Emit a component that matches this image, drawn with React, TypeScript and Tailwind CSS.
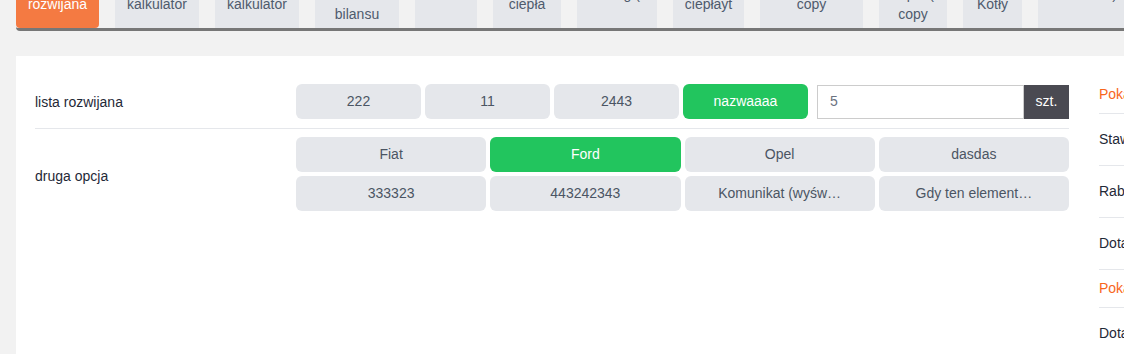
import React from "react";

type Tab = { w: string; lines: string[]; active?: boolean };

const tabs: Tab[] = [
    { w: "w-[83px]", lines: ["rozwijana"], active: true },
    { w: "w-[84px]", lines: ["kalkulator"] },
    { w: "w-[84px]", lines: ["kalkulator"] },
    { w: "w-[84px]", lines: ["kalkulator", "bilansu"] },
    { w: "w-[62px]", lines: [] },
    { w: "w-[68px]", lines: ["ciepła"] },
    { w: "w-[80px]", lines: ["Obieg (", ""] },
    { w: "w-[71px]", lines: ["ciepłayt"] },
    { w: "w-[103px]", lines: ["copy"] },
    { w: "w-[68px]", lines: ["kopia (", "copy"] },
    { w: "w-[59px]", lines: ["Kotły"] },
    { w: "w-[95px]", lines: ["kotłownia)", ""] },
];

const firstRow = ["222", "11", "2443", "nazwaaaa"];
const secondRow = ["Fiat", "Ford", "Opel", "dasdas", "333323", "443242343", "Komunikat (wyśw…", "Gdy ten element…"];

const sidebar = [
    { label: "Pokaż szczegóły", accent: true },
    { label: "Stawka VAT", accent: false },
    { label: "Rabat", accent: false },
    { label: "Dotacja", accent: false },
    { label: "Pokaż więcej", accent: true },
    { label: "Dotacja 2", accent: false },
];

const OptionButton = ({ label, selected, className }: { label: string; selected?: boolean; className: string }) => (
    <button
        className={`h-[35px] rounded-md text-[14px] whitespace-nowrap overflow-hidden ${className} ${selected ? "bg-[#22c55e] text-white" : "bg-[#e5e7eb] text-[#4b5563]"}`}
    >
        {label}
    </button>
);

const App = () => {
    return (
        <div className="h-[354px] w-full overflow-hidden bg-[#f2f2f2] font-['Liberation_Sans',Arial,sans-serif]">
            {/* Tabs */}
            <div className="-mt-[20px] ml-4 flex gap-4 border-b-[3px] border-[#777777] rounded-bl-[4px]">
                {tabs.map((tab, i) => (
                    <div
                        key={i}
                        className={`${tab.w} h-[48px] shrink-0 flex flex-col items-center justify-center text-center text-[14px] leading-5 whitespace-nowrap ${tab.active ? "bg-[#f47a42] text-white rounded-b-[4px]" : "bg-[#e5e7eb] text-[#4f5b6d]"}`}
                    >
                        {tab.lines.map((line, j) => (
                            <div key={j} className="h-5">{line}</div>
                        ))}
                    </div>
                ))}
            </div>

            {/* Panel */}
            <div className="mt-[25px] ml-4 flex bg-white pl-[19px] pt-5 h-[400px]">
                <div className="w-[1034px] shrink-0">
                    <div className="flex items-center pt-2 pb-[9px] border-b border-[#e5e7eb]">
                        <div className="w-[261px] shrink-0 pt-0.5 text-[14px] text-[#1f2937]">lista rozwijana</div>
                        <div className="flex flex-1 items-center gap-1">
                            {firstRow.map((item, i) => (
                                <OptionButton key={i} label={item} selected={item === "nazwaaaa"} className="w-[125px] shrink-0" />
                            ))}
                            <div className="ml-[5px] flex flex-1 h-[34px]">
                                <div className="flex-1 flex items-center border border-[#cccccc] pl-3 text-[14px] text-[#6b7280]">5</div>
                                <div className="w-[45px] flex items-center justify-center bg-[#4a4a52] text-white text-[14px]">szt.</div>
                            </div>
                        </div>
                    </div>
                    <div className="flex items-center py-2">
                        <div className="w-[261px] shrink-0 pt-1 text-[14px] text-[#1f2937]">druga opcja</div>
                        <div className="grid flex-1 grid-cols-4 gap-1">
                            {secondRow.map((item, i) => (
                                <OptionButton key={i} label={item} selected={item === "Ford"} className="px-2" />
                            ))}
                        </div>
                    </div>
                </div>

                {/* Sidebar */}
                <div className="ml-[30px] w-[220px] shrink-0">
                    {sidebar.map((row, i) => (
                        <div
                            key={i}
                            className={`flex items-center border-b border-[#e5e7eb] text-[14px] whitespace-nowrap ${row.accent ? "h-[38px] text-[#f8661c]" : "h-[52px] text-[#1f2937]"}`}
                        >
                            {row.label}
                        </div>
                    ))}
                </div>
            </div>
        </div>
    );
};

export default App;
